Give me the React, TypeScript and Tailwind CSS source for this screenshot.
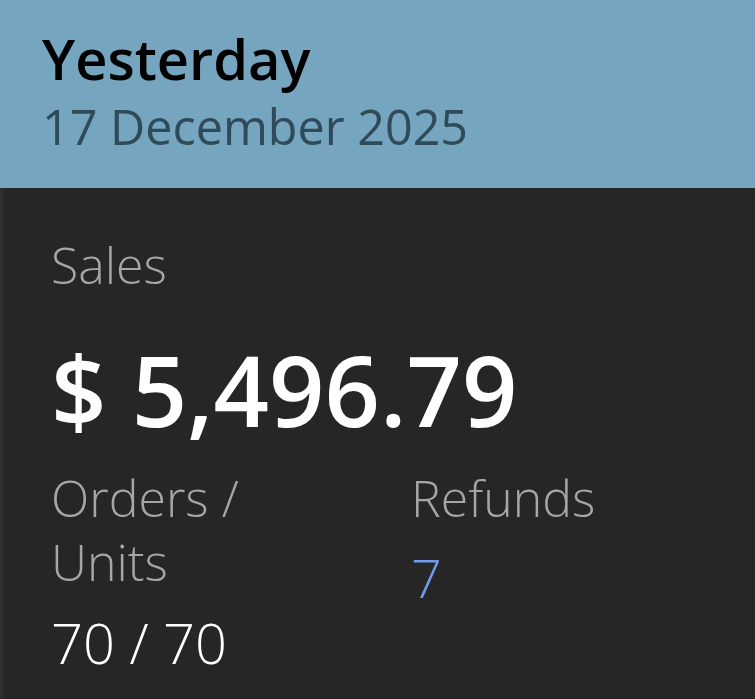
export default function App() {
  return (
    <div className="w-[755px] h-[699px] overflow-hidden bg-[#262626] font-['Open_Sans',sans-serif]">
      <div className="h-[188px] bg-[#76a6bf] pl-[42px] pt-[22px]">
        <h1 className="text-[56px] leading-[72px] font-semibold text-black">Yesterday</h1>
        <div className="text-[48.5px] leading-[64px] font-normal text-[#2f4a58]">17 December 2025</div>
      </div>
      <div className="h-[511px] border-l-[3px] border-[#2f2f2f] pl-[48px] pt-[45px]">
        <div className="text-[50px] leading-[64px] font-light text-[#a6a6a6]">Sales</div>
        <div className="mt-[32px] text-[97px] leading-[120px] font-semibold text-white">$ 5,496.79</div>
        <div className="mt-[17px] grid grid-cols-[360px_1fr]">
          <div>
            <div className="text-[50px] leading-[64px] font-light text-[#a6a6a6]">
              Orders /<br />Units
            </div>
            <div className="text-[56px] leading-[96px] font-light text-white">70 / 70</div>
          </div>
          <div>
            <div className="text-[50px] leading-[64px] font-light text-[#a6a6a6]">Refunds</div>
            <div className="text-[54px] leading-[95px] font-light text-[#6f9be8]">7</div>
          </div>
        </div>
      </div>
    </div>
  );
}
